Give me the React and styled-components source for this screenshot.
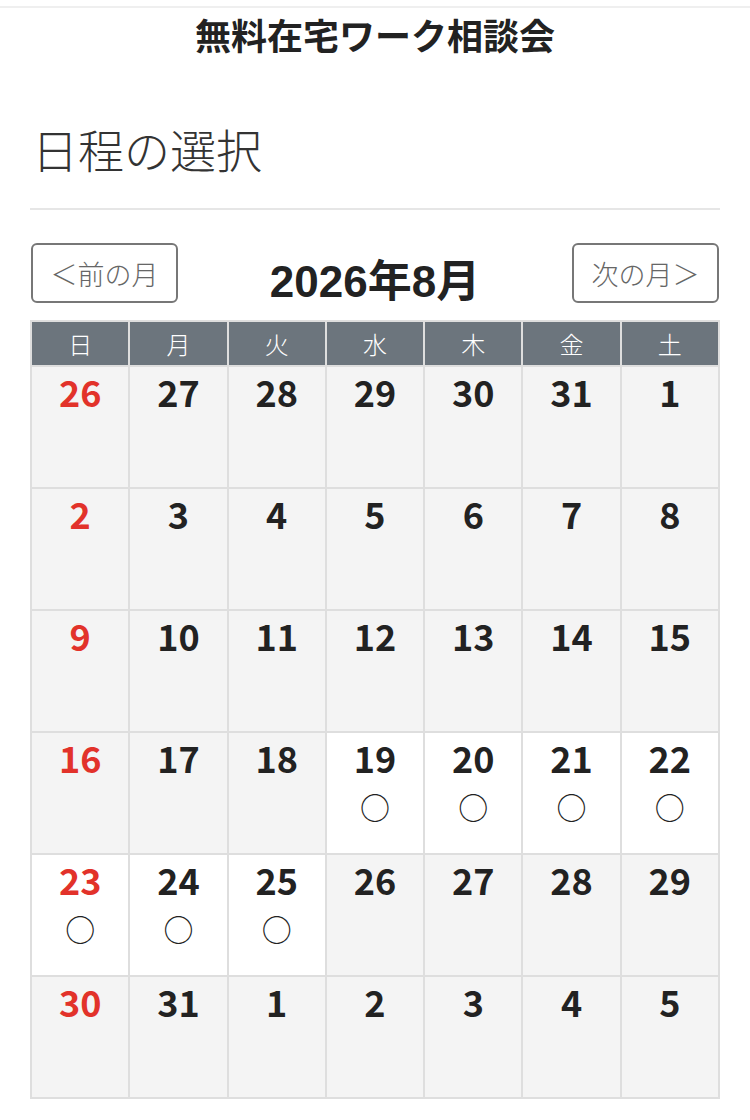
import styled, { createGlobalStyle } from "styled-components";

const Global = createGlobalStyle`
  body {
    margin: 0;
    background: #fff;
    font-family: "Noto Sans CJK JP", "Noto Sans", sans-serif;
    color: #222;
  }
`;

const Page = styled.div`
  border-top: 2px solid #efefef;
  margin-top: 6px;
`;

const Title = styled.h1`
  margin: 0;
  padding-top: 4px;
  font-size: 36px;
  line-height: 44px;
  font-weight: 700;
  text-align: center;
  color: #222;
`;

const Content = styled.div`
  padding: 0 30px;
`;

const Heading = styled.h2`
  margin: 0;
  padding: 64px 0 32px 2px;
  font-size: 46px;
  line-height: 56px;
  font-weight: 300;
  color: #333;
  border-bottom: 2px solid #e6e6e6;
`;

const Nav = styled.div`
  display: flex;
  align-items: center;
  justify-content: space-between;
  height: 60px;
  margin: 33px 0 17px;
`;

const NavButton = styled.button`
  width: 147px;
  height: 60px;
  margin: 0 1px;
  border: 2px solid #777;
  border-radius: 6px;
  background: #fff;
  color: #666;
  font-family: inherit;
  font-size: 27px;
  font-weight: 300;
  padding: 0;
`;

const Month = styled.div`
  font-family: "Liberation Sans", "Noto Sans CJK JP", sans-serif;
  font-size: 44px;
  line-height: 60px;
  font-weight: 700;
  transform: translateY(9px);
  color: #222;
`;

const Grid = styled.div`
  display: grid;
  grid-template-columns: repeat(7, 1fr);
  gap: 2px;
  padding: 2px;
  background: #dedede;
`;

const HeadCell = styled.div`
  height: 43px;
  background: #6c757d;
  color: #fff;
  font-size: 24px;
  font-weight: 300;
  display: flex;
  align-items: center;
  justify-content: center;
`;

const DayCell = styled.div`
  height: 120px;
  background: ${(p) => (p.open ? "#fff" : "#f4f4f4")};
  display: flex;
  flex-direction: column;
  align-items: center;
`;

const DayNum = styled.div`
  font-size: 36px;
  font-weight: 700;
  line-height: 52px;
  margin-top: -2px;
  color: ${(p) => (p.sun ? "#e2322a" : "#222")};
`;

const Mark = styled.div`
  font-size: 30px;
  line-height: 36px;
  margin-top: 5px;
  color: #222;
`;

const week = ["日", "月", "火", "水", "木", "金", "土"];

const days = [
  26, 27, 28, 29, 30, 31, 1,
  2, 3, 4, 5, 6, 7, 8,
  9, 10, 11, 12, 13, 14, 15,
  16, 17, 18, 19, 20, 21, 22,
  23, 24, 25, 26, 27, 28, 29,
  30, 31, 1, 2, 3, 4, 5,
];

// 空きがあるのは 8/19〜8/25
const isOpen = (i) => i >= 24 && i <= 30;

function App() {
  return (
    <Page>
      <Global />
      <Title>無料在宅ワーク相談会</Title>
      <Content>
        <Heading>日程の選択</Heading>
        <Nav>
          <NavButton>＜前の月</NavButton>
          <Month>2026年8月</Month>
          <NavButton>次の月＞</NavButton>
        </Nav>
        <Grid>
          {week.map((w) => (
            <HeadCell key={w}>{w}</HeadCell>
          ))}
          {days.map((d, i) => (
            <DayCell key={i} open={isOpen(i)}>
              <DayNum sun={i % 7 === 0}>{d}</DayNum>
              {isOpen(i) && <Mark>○</Mark>}
            </DayCell>
          ))}
        </Grid>
      </Content>
    </Page>
  );
}

export default App;
